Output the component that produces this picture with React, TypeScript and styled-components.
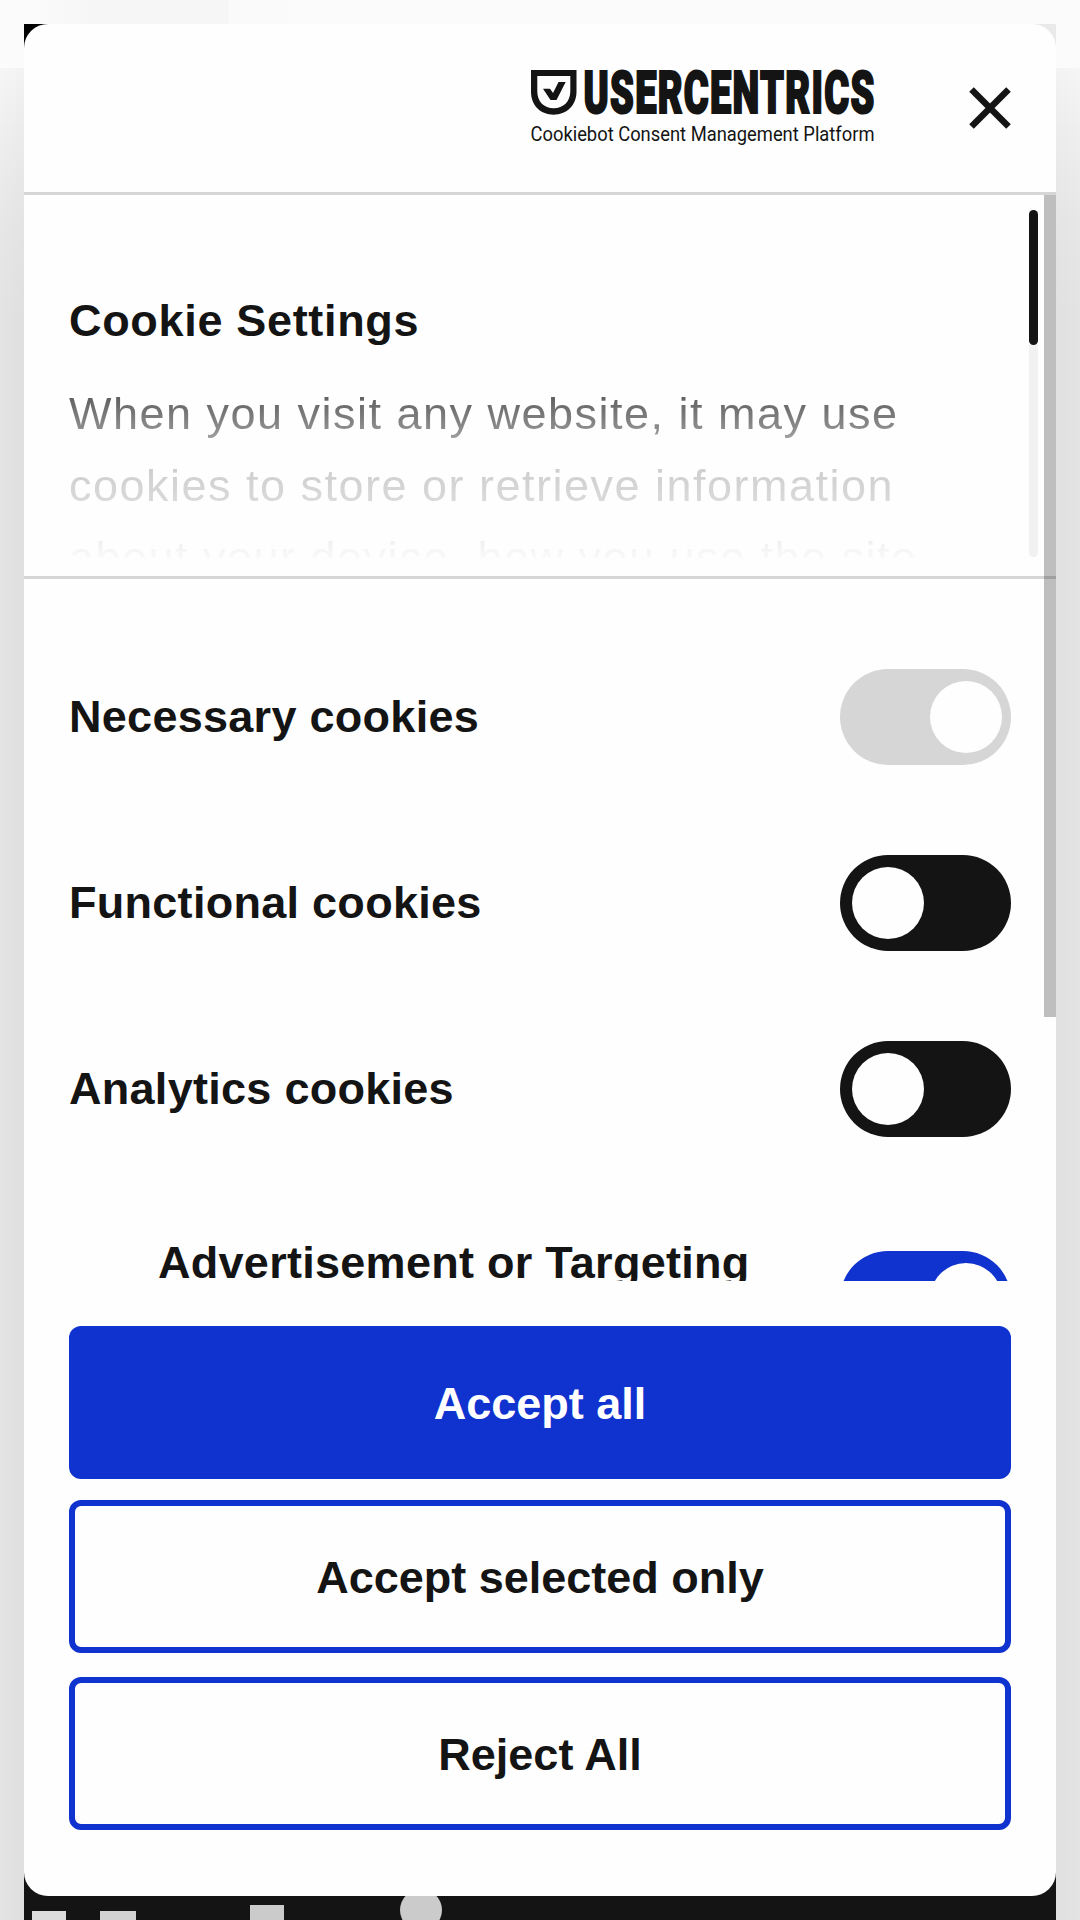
import React, { useState } from "react";
import styled, { createGlobalStyle } from "styled-components";

const GlobalStyle = createGlobalStyle`
  *, *::before, *::after { box-sizing: border-box; }
  html, body { margin: 0; padding: 0; overflow: hidden; }
  body { background: #fcfcfc; font-family: "Liberation Sans", Arial, sans-serif; color: #141414; }
`;

const Page = styled.div`
  position: relative;
  width: 1080px;
  height: 1920px;
  padding: 24px;
  overflow: hidden;
  background:
    linear-gradient(to right, #fcfcfc 0, #fafafa 40px, #f6f6f6 100px, #f6f6f6 228px, #fafafa 229px, #fbfbfb 100%) 0 0 / 100% 68px no-repeat,
    linear-gradient(to right, transparent 0, rgba(0, 0, 0, 0.015) 24px, rgba(0, 0, 0, 0.01) 1056px, transparent 100%),
    linear-gradient(to bottom, #f6f6f6 68px, #efefef 130px, #e7e7e7 220px, #e3e3e3 320px, #e3e3e3 100%);
`;

const Backdrop = styled.svg`
  position: absolute;
  left: 0;
  top: 0;
`;

const Dialog = styled.section`
  position: relative;
  display: flex;
  flex-direction: column;
  width: 1032px;
  height: 1872px;
  border-radius: 24px;
  background: #fefefe;
  overflow: hidden;
`;

const Header = styled.header`
  display: flex;
  align-items: center;
  justify-content: flex-end;
  gap: 92px;
  height: 171px;
  padding: 0 42px 0 0;
  border-bottom: 3px solid #d6d6d6;
`;

const LogoMark = styled.svg`
  display: block;
  overflow: visible;
`;

const CloseButton = styled.button`
  display: flex;
  padding: 0;
  border: 0;
  background: none;
  color: #141414;
`;

const Scroller = styled.div`
  position: relative;
  height: 1086px;
  overflow: hidden;
`;

const PageThumb = styled.div`
  position: absolute;
  right: 0;
  top: 0;
  width: 12px;
  height: 822px;
  background: rgba(0, 0, 0, 0.25);
`;

const Intro = styled.div`
  display: flex;
  justify-content: space-between;
  height: 384px;
  padding: 15px 18px 0 45px;
  border-bottom: 3px solid #d6d6d6;
`;

const IntroText = styled.div`
  height: 348px;
  padding-top: 75px;
  overflow: hidden;
`;

const Title = styled.h2`
  margin: 0;
  font-size: 45px;
  line-height: 72px;
  font-weight: 700;
  letter-spacing: 0.675px;
`;

const Copy = styled.p`
  margin: 21px 0 0;
  width: 880px;
  font-size: 45px;
  line-height: 72px;
  letter-spacing: 1.49px;
  white-space: pre-line;
  color: transparent;
  background: linear-gradient(to bottom, #505050 8px, #8f8f8f 52px, #cacaca 80px, #dcdcdc 130px, #eeeeee 160px, #fbfbfb 182px);
  background-clip: text;
  -webkit-background-clip: text;
`;

const IntroTrack = styled.div`
  width: 9px;
  height: 347px;
  border-radius: 5px;
  background: #f1f1f1;
`;

const IntroThumb = styled.div`
  height: 135px;
  border-radius: 5px;
  background: #141414;
`;

const Options = styled.div`
  display: flex;
  flex-direction: column;
  gap: 90px;
  padding: 90px 45px 0;
`;

const Option = styled.div<{ $nested?: boolean }>`
  display: flex;
  align-items: center;
  justify-content: space-between;
  height: ${(p) => (p.$nested ? "144px" : "96px")};
  padding-left: ${(p) => (p.$nested ? "89px" : "0")};
`;

const OptionLabel = styled.span<{ $nested?: boolean }>`
  align-self: ${(p) => (p.$nested ? "flex-start" : "center")};
  font-size: 45px;
  line-height: 72px;
  font-weight: 700;
  letter-spacing: 0.28px;
  white-space: nowrap;
`;

const Toggle = styled.button<{ $on: boolean; $color: string }>`
  display: flex;
  flex: none;
  align-items: center;
  justify-content: ${(p) => (p.$on ? "flex-end" : "flex-start")};
  width: 171px;
  height: 96px;
  padding: 0 9px 0 12px;
  border: 0;
  border-radius: 48px;
  background: ${(p) => p.$color};
`;

const Knob = styled.span`
  width: 72px;
  height: 72px;
  border-radius: 50%;
  background: #fefefe;
`;

const Actions = styled.footer`
  display: flex;
  flex-direction: column;
  padding: 45px 45px 0;
`;

const ActionButton = styled.button<{ $primary?: boolean; $gap?: number }>`
  height: 153px;
  margin: 0 0 ${(p) => p.$gap ?? 0}px;
  padding: 2px 0 0;
  border: 6px solid #1032cf;
  border-radius: 12px;
  background: ${(p) => (p.$primary ? "#1032cf" : "#fefefe")};
  color: ${(p) => (p.$primary ? "#fff" : "#141414")};
  font: 700 45px/72px "Liberation Sans", Arial, sans-serif;
`;

const Logo = () => (
  <LogoMark width="344" height="80" viewBox="530 68 344 80" fill="#141414">
    <path fillRule="evenodd" d="M531 70H576.500V91.500C576.500 106 566 114.700 553.700 114.700C541 114.700 531 106 531 91.500ZM537.300 76V91.500C537.300 101.500 544 108.300 553.700 108.300C563.300 108.300 570.300 101.500 570.300 91.500V76Z" />
    <path d="M543 88.700H550L553 93L558.500 82H565.700L556.500 100H550.500Z" />
    <text x="583.500" y="113.400" fontFamily="Roboto, sans-serif" fontWeight="900" fontSize="59" letterSpacing="2" textLength="292" lengthAdjust="spacingAndGlyphs" stroke="#141414" strokeWidth="2.200">USERCENTRICS</text>
    <text x="530.500" y="141" fontFamily="Roboto, sans-serif" fontSize="21" textLength="344" lengthAdjust="spacingAndGlyphs">Cookiebot Consent Management Platform</text>
  </LogoMark>
);

const initialOptions = [
  { name: "Necessary cookies", on: true, locked: true },
  { name: "Functional cookies", on: false },
  { name: "Analytics cookies", on: false },
  { name: "Advertisement or Targeting", on: true, nested: true },
];

export default function App() {
  const [options, setOptions] = useState(initialOptions);
  const flip = (i: number) =>
    setOptions((all) => all.map((o, n) => (n === i && !o.locked ? { ...o, on: !o.on } : o)));
  return (
    <>
      <GlobalStyle />
      <Page>
        <Backdrop width="1080" height="1920">
          <rect x="24" y="24" width="60" height="60" fill="#000" />
          <rect x="1016" y="24" width="40" height="40" fill="#e9e9e9" />
          <rect x="24" y="1840" width="1032" height="80" fill="#141414" />
          <g fill="#cbcbcb">
            <rect x="32" y="1911" width="34" height="20" fill="#dcdcdc" />
            <rect x="100" y="1911" width="36" height="20" fill="#d2d2d2" />
            <rect x="250" y="1905" width="34" height="20" />
            <circle cx="421" cy="1910" r="21" />
          </g>
        </Backdrop>
        <Dialog role="dialog" aria-label="Cookie Settings">
          <Header>
            <Logo />
            <CloseButton aria-label="Close">
              <svg width="48" height="48" viewBox="0 0 48 48" stroke="currentColor" strokeWidth="6.500">
                <path d="M5.500 5.500L42.500 42.500M42.500 5.500L5.500 42.500" />
              </svg>
            </CloseButton>
          </Header>
          <Scroller>
            <Intro>
              <IntroText>
                <Title>Cookie Settings</Title>
                <Copy>{"When you visit any website, it may use\ncookies to store or retrieve information\nabout your device, how you use the site"}</Copy>
              </IntroText>
              <IntroTrack>
                <IntroThumb />
              </IntroTrack>
            </Intro>
            <Options>
              {options.map((o, i) => (
                <Option key={o.name} $nested={o.nested}>
                  <OptionLabel $nested={o.nested}>{o.name}</OptionLabel>
                  <Toggle
                    role="switch"
                    aria-checked={o.on}
                    aria-label={o.name}
                    $on={o.on}
                    $color={o.locked ? "#d6d6d6" : o.on ? "#1032cf" : "#141414"}
                    onClick={() => flip(i)}
                  >
                    <Knob />
                  </Toggle>
                </Option>
              ))}
            </Options>
            <PageThumb />
          </Scroller>
          <Actions>
            <ActionButton $primary $gap={21}>Accept all</ActionButton>
            <ActionButton $gap={24}>Accept selected only</ActionButton>
            <ActionButton>Reject All</ActionButton>
          </Actions>
        </Dialog>
      </Page>
    </>
  );
}
